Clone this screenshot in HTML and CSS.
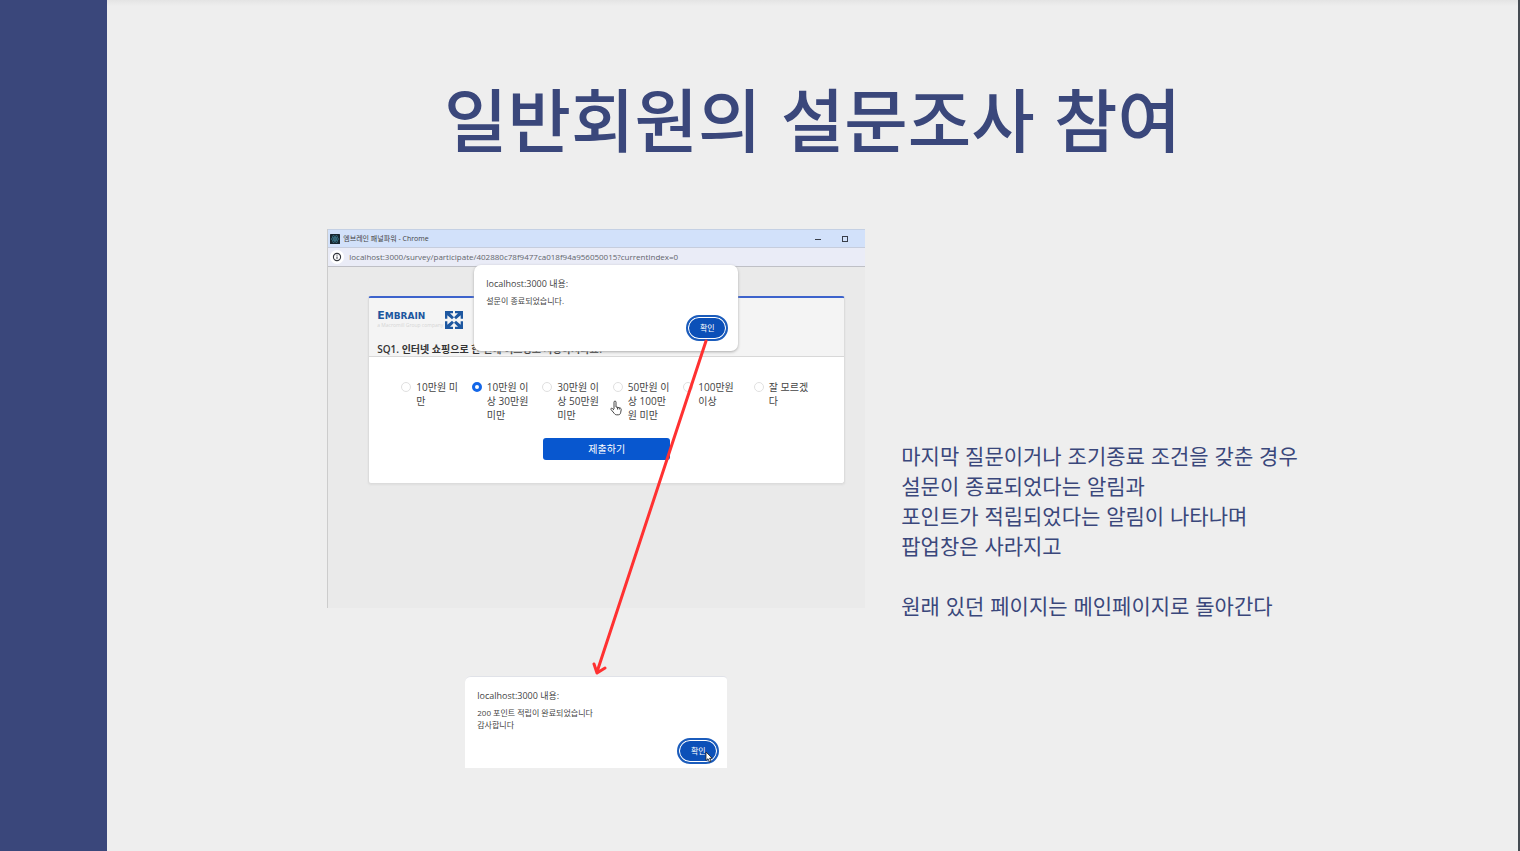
FILE: index.html
```html
<!DOCTYPE html>
<html lang="ko">
<head>
<meta charset="utf-8">
<meta name="viewport" content="width=device-width, initial-scale=1">
<title>일반회원의 설문조사 참여</title>
<link rel="stylesheet" href="styles.css">
</head>
<body>
<div class="slide">
  <div class="band"></div>
  <main class="content">
    <h1 class="title">일반회원의 설문조사 참여</h1>
    <div class="columns">
      <div class="flow">
        <section class="window">
          <div class="titlebar">
            <svg class="favicon" viewBox="0 0 20 20" aria-hidden="true"><rect width="20" height="20" rx="1" fill="#17252e"/><g fill="none" stroke="#3f8196" stroke-width="1.2"><ellipse cx="10" cy="10" rx="8" ry="3"/><ellipse cx="10" cy="10" rx="8" ry="3" transform="rotate(60 10 10)"/><ellipse cx="10" cy="10" rx="8" ry="3" transform="rotate(120 10 10)"/></g><circle cx="10" cy="10" r="1.6" fill="#5ba6b8"/></svg>
            <span class="window-name">엠브레인 패널파워 - Chrome</span>
            <button class="control" type="button" aria-label="최소화"><svg viewBox="0 0 8 8"><path d="M1 4.500h6" stroke="#3a3f4a" stroke-width="1"/></svg></button>
            <button class="control" type="button" aria-label="최대화"><svg viewBox="0 0 8 8"><rect x="1.5" y="1.5" width="5" height="5" fill="none" stroke="#3a3f4a"/></svg></button>
          </div>
          <div class="addressbar">
            <svg class="info" viewBox="0 0 14 14" aria-hidden="true"><circle cx="7" cy="7" r="7" fill="#fff"/><circle cx="7" cy="7" r="3.6" fill="none" stroke="#33363c" stroke-width="1.1"/><path d="M7 6.5v2.4M7 4.8v.9" stroke="#33363c" stroke-width="1"/></svg>
            <span class="url">localhost:3000/survey/participate/402880c78f9477ca018f94a956050015?currentIndex=0</span>
          </div>
          <div class="viewport">
            <form class="survey">
              <div class="survey-head">
                <div class="brand">
                  <div class="brand-text">
                    <span class="brand-name">E<small>MBRAIN</small></span>
                    <span class="brand-sub">a Macromill Group company</span>
                  </div>
                  <svg class="brand-mark" viewBox="0 0 54 54" aria-hidden="true"><g fill="#1d57a0"><path id="corner" d="M0 0H24V7H15L27 19 21 25 7 13V23H0Z"/><path d="M54 0H30V7H39L27 19 33 25 47 13V23H54Z"/><path d="M0 54H24V47H15L27 35 21 29 7 41V31H0Z"/><path d="M54 54H30V47H39L27 35 33 29 47 41V31H54Z"/></g></svg>
                </div>
                <h2 class="question">SQ1. 인터넷 쇼핑으로 한 번에 어느정도 사용하시나요?</h2>
              </div>
              <div class="survey-body">
                <div class="options">
                  <label class="option"><input type="radio" name="amount"><span>10만원 미만</span></label>
                  <label class="option"><input type="radio" name="amount" checked><span>10만원 이상 30만원 미만</span></label>
                  <label class="option"><input type="radio" name="amount"><span>30만원 이상 50만원 미만</span></label>
                  <label class="option"><input type="radio" name="amount"><span>50만원 이상 100만원 미만</span></label>
                  <label class="option"><input type="radio" name="amount"><span>100만원 이상</span></label>
                  <label class="option"><input type="radio" name="amount"><span>잘 모르겠다</span></label>
                </div>
                <button class="submit" type="button">제출하기</button>
              </div>
            </form>
          </div>
          <div class="dialog dialog-over">
            <p class="dialog-host">localhost:3000 내용:</p>
            <p class="dialog-text">설문이 종료되었습니다.</p>
            <button class="confirm" type="button">확인</button>
          </div>
          <svg class="hand" viewBox="0 0 12 16" aria-hidden="true"><path d="M4 9V2.2c0-1.6 2-1.6 2 0V7l3.700.8c1.200.3 1.600.9 1.500 2l-.6 3c-.3 1.300-1 2-2.200 2H6.500c-1 0-1.500-.4-2.100-1.200L1 9.500c-.6-1 .6-1.700 1.400-1L4 10M7.500 7.500v2M9.300 7.900v1.600" fill="#fff" stroke="#333" stroke-width=".9" stroke-linejoin="round"/></svg>
        </section>
        <div class="dialog dialog-points">
          <p class="dialog-host">localhost:3000 내용:</p>
          <p class="dialog-text">200 포인트 적립이 완료되었습니다<br>감사합니다</p>
          <button class="confirm" type="button">확인</button>
          <svg class="pointer" viewBox="0 0 8 12" aria-hidden="true"><path d="M1 1v8.500l2-1.800 1.500 3.300 1.500-.7L4.600 7.200H7.200Z" fill="#fff" stroke="#222" stroke-width=".8"/></svg>
        </div>
        <svg class="arrow" viewBox="0 0 122 340" aria-hidden="true"><path d="M115 4 6 335M3 327 6 336 14 331" fill="none" stroke="#ff3131" stroke-width="3" stroke-linecap="round" stroke-linejoin="round"/></svg>
      </div>
      <div class="notes">
        <p>마지막 질문이거나 조기종료 조건을 갖춘 경우<br>설문이 종료되었다는 알림과<br>포인트가 적립되었다는 알림이 나타나며<br>팝업창은 사라지고</p>
        <p>원래 있던 페이지는 메인페이지로 돌아간다</p>
      </div>
    </div>
  </main>
</div>
</body>
</html>
```

FILE: styles.css
```css
* { box-sizing: border-box; }

body {
  margin: 0;
  background: #eee;
  color: #3a477b;
  font-family: "Noto Sans CJK KR", sans-serif;
}

h1, h2, p { margin: 0; }

button { margin: 0; padding: 0; border: 0; font-family: inherit; }

.slide {
  display: flex;
  min-height: 100vh;
  border-right: 2px solid #444a51;
  background: linear-gradient(#e4e4e4, #eee 6px);
}

.band { flex: 0 0 107px; background: #3a477b; }

.content { flex: 1; min-width: 0; padding: 65px 0 80px; }

.title {
  font-size: 69px;
  line-height: 104px;
  font-weight: 500;
  text-align: center;
}

.columns {
  display: flex;
  justify-content: center;
  gap: 36px;
  margin-top: 60px;
}

.flow { position: relative; flex: 0 1 538px; }

.notes { margin-top: 211px; font-size: 21px; line-height: 30px; }
.notes p + p { margin-top: 30px; }

.window {
  position: relative;
  border-left: 1px solid #ccc;
  background: #eaeaea;
  color: #444;
  font-family: "Open Sans", "Noto Sans CJK KR", sans-serif;
}

.titlebar {
  display: flex;
  align-items: center;
  height: 18px;
  padding: 0 16px 0 2px;
  border-top: 1px solid #c4d0e4;
  background: #d2e1fa;
}

.favicon { width: 10px; height: 10px; }
.window-name { flex: 1; margin-left: 3px; font-size: 7px; line-height: 14px; }
.control { display: flex; background: none; margin-left: 19px; }
.control svg { width: 8px; height: 8px; }

.addressbar {
  display: flex;
  align-items: center;
  height: 20px;
  padding-left: 2px;
  border-top: 1px solid #c6cddd;
  border-bottom: 1px solid #bfc0c6;
  background: #eaecf7;
}

.info { width: 14px; height: 14px; }
.url { margin-left: 5px; font-size: 8px; line-height: 12px; color: #62656c; }

.viewport { padding: 29px 20px 124px 40px; }

.survey {
  overflow: hidden;
  border: 1px solid #dcdcdc;
  border-top: 2px solid #3d63cc;
  border-radius: 3px;
  background: #fff;
  box-shadow: 0 1px 2px #ddd;
}

.survey-head {
  padding: 12px 8px 0;
  border-bottom: 1px solid #d8d8d8;
  background: #f4f4f4;
}

.brand { display: flex; gap: 4px; height: 20px; }
.brand-text { width: 64px; white-space: nowrap; }
.brand-name {
  display: block;
  color: #1d57a0;
  font: bold 11px/12px "DejaVu Sans", sans-serif;
}
.brand-name small { font-size: 9px; }
.brand-sub { display: block; color: #d4d4d4; font-size: 5px; line-height: 6px; }
.brand-mark { width: 18px; height: 18px; margin-top: 1px; }

.question {
  margin-top: 12px;
  font-size: 10px;
  line-height: 14px;
  font-weight: 600;
  color: #333;
  white-space: nowrap;
}

.survey-body { padding: 23px 20px 23px 32px; text-align: center; }

.options { display: grid; grid-template-columns: repeat(6, 1fr); text-align: left; }

.option {
  display: flex;
  gap: 5px;
  padding-right: 12px;
  font-size: 10px;
  line-height: 14px;
  word-break: break-all;
}

.option input {
  appearance: none;
  flex: none;
  width: 10px;
  height: 10px;
  margin: 2px 0 0;
  border: 1px solid #e0e0e0;
  border-radius: 50%;
  background: #fff;
}
.option input:checked { border: 3px solid #1467e8; }

.submit {
  width: 127px;
  height: 22px;
  margin: 16px 12px 0 0;
  border-radius: 3px;
  background: #0857cf;
  color: #fff;
  font-size: 10px;
  line-height: 22px;
}

.dialog {
  display: flex;
  flex-direction: column;
  padding: 12px 10px 10px 12px;
  background: #fff;
  color: #444;
  font-family: "Open Sans", "Noto Sans CJK KR", sans-serif;
}

.dialog-over {
  position: absolute;
  top: 36px;
  left: 146px;
  width: 264px;
  height: 86px;
  border-radius: 7px;
  box-shadow: 0 1px 3px #aaa;
}

.dialog-points {
  position: relative;
  width: 262px;
  height: 92px;
  margin: 68px 0 0 138px;
  padding: 12px 8px 4px 12px;
  border-top: 1px solid #e0e2e8;
  border-radius: 6px 4px 0 0;
}

.dialog-host { font-size: 9px; line-height: 14px; }
.dialog-text { margin-top: 4px; font-size: 8px; line-height: 12px; }

.confirm {
  align-self: flex-end;
  flex: none;
  width: 42px;
  height: 26px;
  margin-top: auto;
  border: 2px solid #1b5cbc;
  border-radius: 13px;
  background: #0c50b8;
  box-shadow: inset 0 0 0 1px #fff;
  color: #fff;
  font-size: 8px;
  line-height: 20px;
}

.hand { position: absolute; top: 171px; left: 282px; width: 12px; height: 16px; }
.pointer { position: absolute; top: 74px; left: 240px; width: 8px; height: 12px; }
.arrow { position: absolute; top: 108px; left: 264px; width: 122px; height: 340px; }
```
